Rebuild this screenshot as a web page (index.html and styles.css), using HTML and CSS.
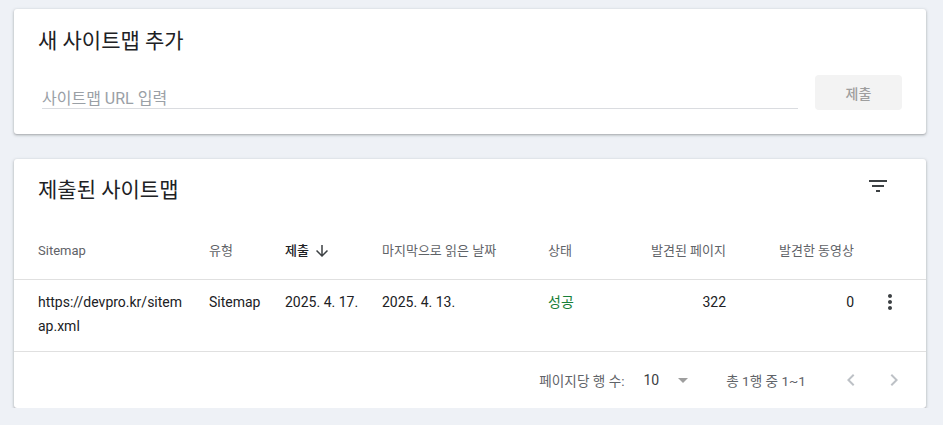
FILE: index.html
```html
<!DOCTYPE html>
<html lang="ko">
<head>
<meta charset="utf-8">
<link rel="stylesheet" href="styles.css">
</head>
<body>
<div class="page">
  <section class="card add-card">
    <h2 class="card-title">새 사이트맵 추가</h2>
    <div class="add-row">
      <div class="url-field"><span class="placeholder">사이트맵 URL 입력</span></div>
      <button class="submit-btn" type="button">제출</button>
    </div>
  </section>

  <section class="card list-card">
    <div class="list-head">
      <h2 class="card-title">제출된 사이트맵</h2>
      <svg class="filter-icon" viewBox="0 0 24 24" width="24" height="24"><path d="M10 18h4v-2h-4v2zM3 6v2h18V6H3zm3 7h12v-2H6v2z"/></svg>
    </div>
    <div class="grid header-row">
      <div class="cell">Sitemap</div>
      <div class="cell">유형</div>
      <div class="cell sorted">제출 <svg class="sort-icon" viewBox="0 0 24 24" width="18" height="18"><path d="M20 12l-1.41-1.41L13 16.17V4h-2v12.17l-5.58-5.59L4 12l8 8 8-8z"/></svg></div>
      <div class="cell">마지막으로 읽은 날짜</div>
      <div class="cell">상태</div>
      <div class="cell num">발견된 페이지</div>
      <div class="cell num">발견한 동영상</div>
      <div class="cell"></div>
    </div>
    <div class="grid data-row">
      <div class="cell url">https://devpro.kr/sitemap.xml</div>
      <div class="cell">Sitemap</div>
      <div class="cell">2025. 4. 17.</div>
      <div class="cell">2025. 4. 13.</div>
      <div class="cell ok">성공</div>
      <div class="cell num">322</div>
      <div class="cell num">0</div>
      <div class="cell action"><svg class="more-icon" viewBox="0 0 24 24" width="24" height="24"><path d="M12 8c1.1 0 2-.9 2-2s-.9-2-2-2-2 .9-2 2 .9 2 2 2zm0 2c-1.1 0-2 .9-2 2s.9 2 2 2 2-.9 2-2-.9-2-2-2zm0 6c-1.1 0-2 .9-2 2s.9 2 2 2 2-.9 2-2-.9-2-2-2z"/></svg></div>
    </div>
    <div class="pager">
      <span class="pager-label">페이지당 행 수:</span>
      <span class="pager-select">10 <svg class="drop-icon" viewBox="0 0 24 24" width="24" height="24"><path d="M7 10l5 5 5-5z"/></svg></span>
      <span class="pager-range">총 1행 중 1~1</span>
      <svg class="chev chev-left" viewBox="0 0 24 24" width="24" height="24"><path d="M15.41 7.41L14 6l-6 6 6 6 1.41-1.41L10.83 12z"/></svg>
      <svg class="chev chev-right" viewBox="0 0 24 24" width="24" height="24"><path d="M10 6L8.59 7.41 13.17 12l-4.58 4.59L10 18l6-6z"/></svg>
    </div>
  </section>
</div>
</body>
</html>
```

FILE: styles.css
```css
* { box-sizing: border-box; }
html, body {
  margin: 0;
  padding: 0;
  background: #eef1f6;
  font-family: Roboto, "Noto Sans CJK KR", "Noto Sans", sans-serif;
  color: #202124;
}
.page {
  width: 912px;
  margin-left: 14px;
  padding-top: 9px;
  display: flex;
  flex-direction: column;
  gap: 25px;
}
.card {
  background: #fff;
  border-radius: 3px;
  box-shadow: 0 1px 2px rgba(60,64,67,.3), 0 1px 3px 1px rgba(60,64,67,.12);
}
.card-title {
  margin: 0;
  font-size: 21px;
  font-weight: 400;
  line-height: 28px;
  color: #202124;
}
.add-card {
  padding: 18px 24px 24px 24px;
  height: 125px;
}
.add-row {
  margin-top: 20px;
  display: flex;
  align-items: flex-start;
}
.url-field {
  flex: 1;
  margin-left: 4px;
  margin-right: 17px;
  height: 34px;
  border-bottom: 1px solid #dadce0;
  padding-top: 14px;
  font-size: 16px;
  line-height: 20px;
}
.placeholder { color: #9aa0a6; }
.submit-btn {
  width: 87px;
  height: 35px;
  border: none;
  border-radius: 4px;
  background: #f3f3f3;
  color: #9e9e9e;
  font-family: inherit;
  font-size: 14px;
  font-weight: 500;
  padding: 0;
}
.list-card { height: 249px; }
.list-head {
  display: flex;
  justify-content: space-between;
  align-items: center;
  padding: 17px 36px 18px 24px;
}
.filter-icon { fill: #3c4043; margin-top: -8px; }
.grid {
  display: grid;
  grid-template-columns: 171px 76px 97px 166px 100px 78px 128px 72px;
  align-items: start;
  padding-left: 24px;
}
.header-row {
  height: 58px;
  padding-top: 19px;
  font-size: 13px;
  line-height: 20px;
  color: #5f6368;
  border-bottom: 1px solid #e0e0e0;
}
.header-row .sorted {
  color: #202124;
  font-weight: 500;
  display: flex;
  align-items: center;
  gap: 4px;
  height: 20px;
}
.sort-icon { fill: #3c4043; }
.cell.num { text-align: right; }
.data-row {
  height: 72px;
  padding-top: 10px;
  font-size: 14px;
  line-height: 24px;
  color: #202124;
  border-bottom: 1px solid #e0e0e0;
}
.cell.url { word-break: break-all; padding-right: 22px; }
.cell.ok { color: #188038; }
.cell.action { display: flex; justify-content: center; }
.more-icon { fill: #3c4043; display: block; }
.pager {
  height: 56px;
  display: flex;
  align-items: center;
  justify-content: flex-end;
  padding-right: 20px;
  font-size: 13.6px;
  color: #5f6368;
}
.pager-select {
  margin-left: 19px;
  display: flex;
  align-items: center;
  font-size: 14px;
  color: #3c4043;
  gap: 12px;
}
.drop-icon { fill: #9e9e9e; }
.pager-range { margin-left: 31px; margin-right: 33px; }
.chev { fill: #bdc1c6; }
.chev-right { margin-left: 19px; }
```
